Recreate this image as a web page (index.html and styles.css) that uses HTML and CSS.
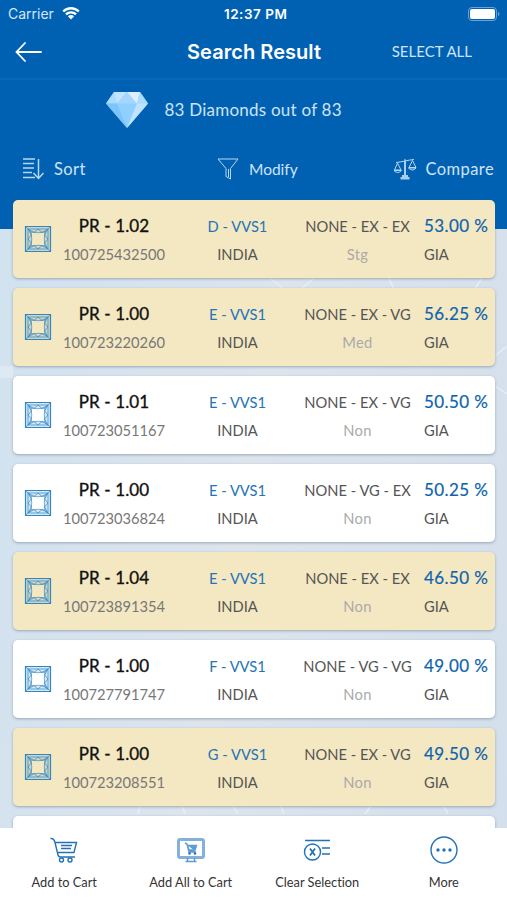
FILE: index.html
```
<!DOCTYPE html>
<html lang="en">
<head>
  <meta charset="UTF-8" />
  <meta name="viewport" content="width=device-width, initial-scale=1.0" />
  <title>Search Result</title>
  <link rel="stylesheet" href="styles.css">
</head>
<body>
  <svg class="sprite" width="0" height="0">
    <symbol id="princess" viewBox="0 0 28 28">
      <path d="M1 1h26v26H1zM7.500 7.500Q6.500 14 7.500 20.500Q14 21.500 20.500 20.500Q21.500 14 20.500 7.500Q14 6.500 7.500 7.500z" fill="#3f93cf" fill-opacity=".22" fill-rule="evenodd" stroke="none"/>
      <path d="M1.500 1.500h25v25h-25z" stroke-width="1.200"/>
      <path d="M4 4h20v20H4zM7 7Q14 8.500 21 7Q19.500 14 21 21Q14 19.500 7 21Q8.500 14 7 7zM1.500 1.500l5.500 5.500M26.500 1.500L21 7M1.500 26.500L7 21M26.500 26.500L21 21M4 4l6 3.500 4-3.500 4 3.500 6-3.500-3.500 6 3.500 4-3.500 4 3.500 6-6-3.500-4 3.500-4-3.500-6 3.500 3.500-6-3.500-4 3.500-4z" stroke-width=".7"/>
    </symbol>
  </svg>

  <header class="header">
    <div class="status">
      <span class="carrier">Carrier</span>
      <svg class="wifi" viewBox="0 0 18 13"><path d="M1.200 4.500a11 11 0 0 1 15.600 0M4 7.400a7 7 0 0 1 10 0" fill="none" stroke="#fff" stroke-width="2.300"/><path d="M5.900 9.300a4.400 4.400 0 0 1 6.200 0L9 12.500z" fill="#fff"/></svg>
      <span class="time">12:37 PM</span>
      <svg class="battery" viewBox="0 0 32 14"><rect x=".5" y=".5" width="28" height="13" rx="3.500" fill="none" stroke="#6ba3d6"/><rect x="2" y="2" width="25" height="10" rx="2" fill="#fff"/><path d="M30 5v4q1.500-.5 1.500-2T30 5z" fill="#6ba3d6"/></svg>
    </div>
    <div class="navbar">
      <svg class="back" viewBox="0 0 28 20"><path d="M26 10H2M10 1L1.500 10l8.500 9"/></svg>
      <h1>Search Result</h1>
      <span class="select-all">SELECT ALL</span>
    </div>
    <div class="summary">
      <svg class="diamond" viewBox="0 0 44 38">
        <path d="M9 1h26l8 11.500L22 37 1 12.500z" fill="#8fd0ff"/>
        <path d="M9 1L1 12.500h11z" fill="#a9dcff"/>
        <path d="M9 1h13l-10 11.500z" fill="#c3e4ff"/>
        <path d="M22 1L12 12.500h20z" fill="#a6d5ff"/>
        <path d="M22 1h13l-3 11.500z" fill="#dcefff"/>
        <path d="M35 1l8 11.500H32z" fill="#a9dcff"/>
        <path d="M1 12.500h11L22 37z" fill="#7cc4fb"/>
        <path d="M32 12.500h11L22 37z" fill="#c0e4ff"/>
      </svg>
      <span class="summary-text">83 Diamonds out of 83</span>
    </div>
    <div class="tools">
      <div class="tool">
        <svg class="tool-icon" viewBox="0 0 22 22"><path d="M1 1h12M1 5.500h11M1 10h11M1 14.500h9M1 19.500h12M16.500 1v19M11.500 15l5 5.500 5-5.500" stroke-width="1.500"/></svg>
        <span class="sort">Sort</span>
      </div>
      <div class="tool">
        <svg class="tool-icon" viewBox="0 0 22 22"><path d="M1 1h20l-7.500 9.500V21L9 18.500v-8zM11.500 11v8"/></svg>
        <span class="modify">Modify</span>
      </div>
      <div class="tool">
        <svg class="tool-icon scale" viewBox="0 0 24 22"><path d="M12 1v17M3 4.500q5-.5 9-1.500t9-1.500M4.500 5L1.500 12h6.500zM19.500 2.500L16 9.500h7zM1 12.500q3.500 4 7.500 0zM15.500 10q4 4 7.500 0z"/><path d="M11 3h2v14h-2zM9 17h6v2H9zM7.500 19h9v2.500h-9z" fill="#a9cdf0" stroke="none"/></svg>
        <span class="compare">Compare</span>
      </div>
    </div>
  </header>

  <main class="list" id="list">
    <svg class="facets" viewBox="0 0 507 632">
      <path d="M270 82l15 12M300 94l14-12M389 82l5 12M474 94l8-12M495 160l12-10M415 170l60-8M495 190l12 8M138 618l4-14M180 604l5 14M230 604l8 14M278 604l6 14M365 618l10-14M440 604l8 14" fill="none" stroke="#f2f7fb" stroke-width="1.500" stroke-opacity=".6"/>
      <path d="M0 170h13v12H0z" fill="#e6eef5" fill-opacity=".6"/>
    </svg>
  </main>

  <nav class="tabbar">
    <div class="tab">
      <svg viewBox="0 0 28 28"><path d="M.5 2.500q3.500-.5 4.500 4l3 12.500q.5 2 2.500 2H25M5 6.500h21.500l-2.500 10H8M11 9.500h11M11 12.500h10"/><circle cx="11.500" cy="24" r="2"/><circle cx="20" cy="24" r="2"/></svg>
      <span>Add to Cart</span>
    </div>
    <div class="tab">
      <svg viewBox="0 0 28 28"><rect x="1.500" y="3.500" width="25" height="18" rx="1.500" stroke="#83b1dc" stroke-width="3"/><path d="M10.500 22v3M17.500 22v3M8.500 25.500h11" stroke-width="1.500" stroke="#5e9bd0"/><path d="M8 7l2 1 2 8h7M10.500 9.500h9l-1.500 4.500h-6z" fill="#5e9bd0" stroke="#5e9bd0"/><circle cx="12.500" cy="17.500" r=".6"/><circle cx="18" cy="17.500" r=".6"/></svg>
      <span>Add All to Cart</span>
    </div>
    <div class="tab">
      <svg viewBox="0 0 28 28"><path d="M2 4.500h25M19 12h8M19 18h8"/><circle cx="9.500" cy="16" r="8"/><path d="M7 12.500l5 7M12 12.500l-5 7" stroke-width="1.800"/></svg>
      <span>Clear Selection</span>
    </div>
    <div class="tab">
      <svg viewBox="0 0 28 28"><circle cx="14" cy="14" r="13"/><g fill="#2272b9" stroke="none"><circle cx="8" cy="14" r="1.700"/><circle cx="14" cy="14" r="1.700"/><circle cx="20" cy="14" r="1.700"/></g></svg>
      <span>More</span>
    </div>
  </nav>

  <script>
    // weight, stone id, color/clarity, finish, fluorescence, discount, selected
    const stones = [
      ['1.02', '100725432500', 'D - VVS1', 'NONE - EX - EX', 'Stg', '53.00', true],
      ['1.00', '100723220260', 'E - VVS1', 'NONE - EX - VG', 'Med', '56.25', true],
      ['1.01', '100723051167', 'E - VVS1', 'NONE - EX - VG', 'Non', '50.50', false],
      ['1.00', '100723036824', 'E - VVS1', 'NONE - VG - EX', 'Non', '50.25', false],
      ['1.04', '100723891354', 'E - VVS1', 'NONE - EX - EX', 'Non', '46.50', true],
      ['1.00', '100727791747', 'F - VVS1', 'NONE - VG - VG', 'Non', '49.00', false],
      ['1.00', '100723208551', 'G - VVS1', 'NONE - EX - VG', 'Non', '49.50', true]
    ];

    const cards = stones.map(([weight, id, grade, finish, fluor, disc, selected]) => `
      <article class="card${selected ? ' selected' : ''}">
        <svg class="shape"><use href="#princess"/></svg>
        <div class="col"><span class="weight">PR - ${weight}</span><span class="stone-id">${id}</span></div>
        <div class="col"><span class="grade">${grade}</span><span class="origin">INDIA</span></div>
        <div class="col"><span class="finish">${finish}</span><span class="fluor">${fluor}</span></div>
        <div class="col price"><span class="disc">${disc} %</span><span class="lab">GIA</span></div>
      </article>`);

    document.getElementById('list').insertAdjacentHTML('beforeend', cards.join('') + '<article class="card"></article>');
  </script>
</body>
</html>
```
FILE: styles.css
```
* { box-sizing: border-box; }
body { margin: 0; height: 900px; overflow: hidden; display: flex; flex-direction: column; font-family: Lato, "Liberation Sans", sans-serif; font-variant-ligatures: none; background: linear-gradient(100deg, #cfe2f0, #dde4ed 50%, #d3dfec); }
.sprite { display: block; position: absolute; }
.header { flex: none; height: 229px; background: #0061b3; color: #cfe3f7; }
.status { height: 27px; padding: 0 8px; display: grid; grid-template-columns: 54px 162px 70px 1fr; align-items: center; color: #fff; font-family: Inter, sans-serif; }
.carrier { font-size: 14px; color: #d5e6f6; }
.wifi { width: 18px; height: 13px; }
.time { font-size: 13.5px; letter-spacing: .5px; font-weight: 600; white-space: nowrap; }
.battery { width: 32px; height: 14px; justify-self: end; margin-right: -1px; }
.navbar { height: 53px; padding: 0 35px 2px 15px; display: grid; grid-template-columns: 172px 1fr auto; align-items: center; border-bottom: 2px solid #0b68b8; }
.back { width: 28px; height: 20px; fill: none; stroke: #fff; stroke-width: 1.8; stroke-linecap: round; }
h1 { margin: 0; font-family: Inter, sans-serif; font-size: 20px; font-weight: 600; letter-spacing: .05px; color: #fff; white-space: nowrap; }
.select-all { font-size: 15px; padding-bottom: 1px; }
.summary { height: 60px; padding-left: 105px; display: flex; align-items: center; gap: 15.5px; }
.diamond { width: 44px; height: 38px; }
.summary-text { font-size: 17px; letter-spacing: .23px; padding-bottom: 2px; }
.tools { height: 58px; padding: 0 13px 0 22px; display: grid; grid-template-columns: 195px 1fr auto; align-items: center; }
.tool { display: flex; align-items: center; gap: 10px; font-size: 16.5px; letter-spacing: .4px; }
.modify { font-size: 15.5px; letter-spacing: 0; }
.tool-icon { width: 22px; height: 22px; fill: none; stroke: #b9d7f2; stroke-width: 1; }
.scale { width: 24px; margin-right: -1px; }
.list { flex: 1; min-height: 0; overflow: hidden; position: relative; margin-top: -33px; padding: 4px 12px 0 13px; display: flex; flex-direction: column; gap: 10px; }
.facets { position: absolute; top: 0; left: 0; width: 507px; height: 632px; }
.card { flex: none; position: relative; height: 78px; display: grid; grid-template-columns: 40px 101px 146px 94px 1fr; align-items: center; background: #fff; border-radius: 5px; box-shadow: 0 1px 3px rgba(60, 80, 100, .4); padding: 1px 0 0 10.5px; }
.selected { background: #f4e8c2; }
.shape { width: 28px; height: 28px; margin-top: -1px; fill: none; stroke: #3186c4; }
.col { display: flex; flex-direction: column; align-items: center; gap: 8px; line-height: 20px; font-size: 14.7px; white-space: nowrap; color: #555; }
.price { align-items: flex-start; padding-left: 19.5px; }
.weight { font-size: 17px; letter-spacing: .1px; color: #111; -webkit-text-stroke: .35px #111; }
.stone-id { color: #777; }
.grade { color: #2574b8; }
.fluor { letter-spacing: .3px; color: #aaa; }
.disc { font-size: 17px; letter-spacing: .4px; color: #0d63ad; -webkit-text-stroke: .2px #0d63ad; }
.tabbar { flex: none; height: 72px; padding-top: 8px; padding-left: 1px; display: grid; grid-template-columns: repeat(4, 1fr); background: #fff; position: relative; }
.tab { display: flex; flex-direction: column; align-items: center; gap: 9px; font-size: 12.8px; line-height: 18px; color: #333; }
.tab svg { width: 28px; height: 28px; fill: none; stroke: #2272b9; stroke-width: 1.4; }
```
